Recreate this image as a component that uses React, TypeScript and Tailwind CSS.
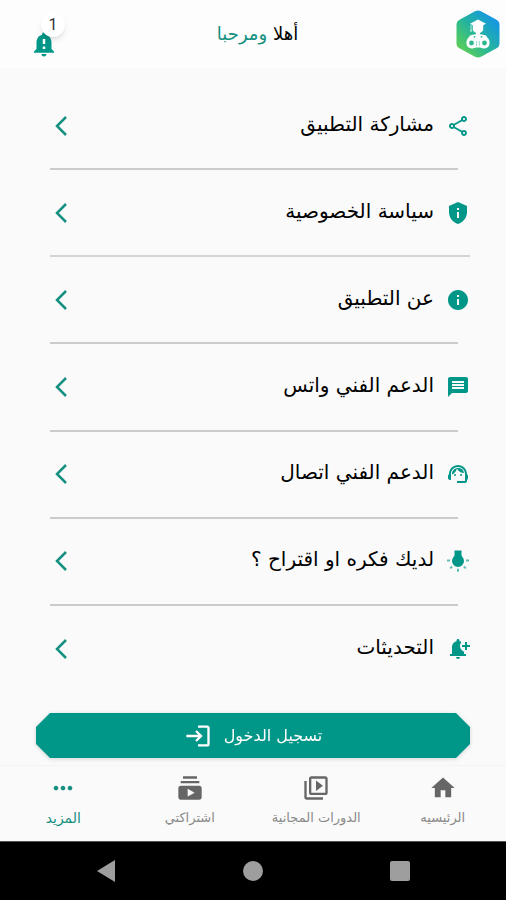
import type { IconType } from "react-icons";
import {
  MdHome,
  MdInfo,
  MdLogin,
  MdMessage,
  MdMoreHoriz,
  MdNotificationAdd,
  MdNotificationImportant,
  MdOutlineShare,
  MdOutlineVideoLibrary,
  MdPrivacyTip,
  MdSubscriptions,
  MdSupportAgent,
} from "react-icons/md";

type Item = { label: string; icon: IconType; wide?: boolean };

function HangingBulb({ className }: { className?: string }) {
  return (
    <svg viewBox="0 0 24 24" className={className} fill="currentColor" aria-hidden="true">
      <path d="M8.500 1.500h7v4.300q0 1.200 1 2.200a6 6 0 1 1-9 0q1-1 1-2.200z" />
      <g opacity=".6">
        <path d="M1 10.500h3v2H1zM20 10.500h3v2h-3zM11 19.800h2v3h-2z" />
        <path d="M5.400 16.800l1.400 1.400-1.900 1.900-1.400-1.400zM18.600 16.800l1.900 1.900-1.400 1.400-1.900-1.900z" />
      </g>
    </svg>
  );
}

const items: Item[] = [
  { label: "مشاركة التطبيق", icon: MdOutlineShare },
  { label: "سياسة الخصوصية", icon: MdPrivacyTip, wide: true },
  { label: "عن التطبيق", icon: MdInfo },
  { label: "الدعم الفني واتس", icon: MdMessage },
  { label: "الدعم الفني اتصال", icon: MdSupportAgent },
  { label: "لديك فكره او اقتراح ؟", icon: HangingBulb },
  { label: "التحديثات", icon: MdNotificationAdd },
];

const tabs: { label: string; icon: IconType; active?: boolean }[] = [
  { label: "الرئيسيه", icon: MdHome },
  { label: "الدورات المجانية", icon: MdOutlineVideoLibrary },
  { label: "اشتراكتي", icon: MdSubscriptions },
  { label: "المزيد", icon: MdMoreHoriz, active: true },
];

function Logo() {
  return (
    <svg viewBox="0 0 44 48" className="h-12 w-11" role="img" aria-label="الشعار">
      <defs>
        <linearGradient id="hex" x1="0.1" y1="0.9" x2="0.85" y2="0.15">
          <stop offset="0" stopColor="#5fd052" />
          <stop offset="0.5" stopColor="#25b59b" />
          <stop offset="1" stopColor="#1597e2" />
        </linearGradient>
      </defs>
      <path
        d="M19 1.200q3-1.600 6 0l15.500 8.600q3 1.700 3 5v18.400q0 3.300-3 5L25 46.800q-3 1.600-6 0L3.500 38.200q-3-1.700-3-5V14.800q0-3.300 3-5z"
        fill="url(#hex)"
      />
      <g fill="#fff">
        <path d="M22 9.500l8 4.200-2.800 1.500v5q-1.500 2.200-3.200 2.800v2h-4v-2q-1.700-.6-3.200-2.800v-5L14 13.700z" />
        <path d="M14.500 15h1v4.500l.8 2h-2.600l.8-2z" opacity=".7" />
        <path d="M14 25.500q8-3 16 0l2.500 4h-21z" />
        <rect x="10.500" y="27" width="11" height="11.500" rx="5" />
        <rect x="22.500" y="27" width="11" height="11.500" rx="5" />
        <rect x="17" y="27" width="10" height="10.500" />
      </g>
      <g fill="#2bb68f">
        <circle cx="15.500" cy="33" r="2.400" />
        <circle cx="28.500" cy="33" r="2.400" />
        <circle cx="18.500" cy="26.800" r=".9" />
        <circle cx="25.500" cy="26.800" r=".9" />
        <path d="M20.300 31h.8v5h-.8zM22.900 31h.8v5h-.8z" opacity=".6" />
      </g>
    </svg>
  );
}

function Chevron() {
  return (
    <svg viewBox="0 0 12 20" className="h-5 w-3 shrink-0" fill="none" stroke="#159080" strokeWidth="2.500" aria-hidden="true">
      <path d="M11 1L2 10l9 9" />
    </svg>
  );
}

export default function App() {
  return (
    <div
      dir="rtl"
      lang="ar"
      className="flex min-h-screen flex-col bg-[#fafafa] font-['DejaVu_Sans','Noto_Sans',sans-serif] text-black"
    >
      <header className="flex h-[68px] shrink-0 items-center justify-between bg-[#fdfdfd] pr-1.5 pl-[29px]">
        <Logo />
        <h1 className="text-lg leading-7">
          أهلا <span className="text-[#159080]">ومرحبا</span>
        </h1>
        <button type="button" aria-label="الإشعارات" className="relative mt-5 size-[30px] text-[#009688]">
          <MdNotificationImportant className="size-[30px]" />
          <span className="absolute -top-4 left-3 flex size-6 items-center justify-center rounded-full bg-white font-[Roboto,sans-serif] text-base text-[#333] shadow-md">
            1
          </span>
        </button>
      </header>

      <main className="flex grow flex-col pt-[15px]">
        <ul className="flex grow flex-col">
          {items.map(({ label, icon: Icon, wide }, i) => (
            <li key={label} className="flex grow basis-0 flex-col">
              <button type="button" className="flex w-full grow items-center pr-9 pl-[55px] text-right">
                <Icon className="size-6 shrink-0 text-[#009688]" />
                <span className="grow pr-3 pb-1 text-xl leading-8">{label}</span>
                <Chevron />
              </button>
              {i < items.length - 1 && (
                <hr className={wide ? "mr-9 ml-[50px] border-t-2 border-[#d4d4d4]" : "mr-12 ml-[50px] border-t-2 border-[#cbcbcb]"} />
              )}
            </li>
          ))}
        </ul>
        <div className="px-9 pt-5 pb-[7px] drop-shadow-sm">
          <button
            type="button"
            className="flex h-[45px] w-full items-center justify-center gap-3 bg-[#009688] text-base text-white [clip-path:polygon(14px_0,calc(100%-14px)_0,100%_14px,100%_31px,calc(100%-14px)_100%,14px_100%,0_31px,0_14px)]"
          >
            <span>تسجيل الدخول</span>
            <MdLogin className="size-7" />
          </button>
        </div>
      </main>

      <nav className="grid h-[76px] shrink-0 grid-cols-4 border-t border-[#f3f3f3] bg-[#fafafa]">
        {tabs.map(({ label, icon: Icon, active }) => (
          <a
            key={label}
            href="#"
            aria-current={active ? "page" : undefined}
            className={
              active
                ? "flex flex-col items-center gap-1 pt-2 text-sm text-[#159080]"
                : "flex flex-col items-center gap-1 pt-2 text-[13px] text-[#8a8a8a]"
            }
          >
            <Icon className={active ? "size-7" : "size-7 text-[#666]"} />
            <span className="leading-6 whitespace-nowrap">{label}</span>
          </a>
        ))}
      </nav>

      <footer dir="ltr" className="flex h-[59px] shrink-0 items-center justify-around border-t border-[#555] bg-black px-8 text-[#9e9e9e]">
        <button type="button" aria-label="رجوع">
          <svg viewBox="0 0 20 22" className="h-[22px] w-5" fill="currentColor">
            <path d="M19 0v22L1 11z" />
          </svg>
        </button>
        <button type="button" aria-label="الشاشة الرئيسية" className="size-5 rounded-full bg-[#9e9e9e]" />
        <button type="button" aria-label="التطبيقات الأخيرة" className="size-5 rounded-xs bg-[#9e9e9e]" />
      </footer>
    </div>
  );
}
